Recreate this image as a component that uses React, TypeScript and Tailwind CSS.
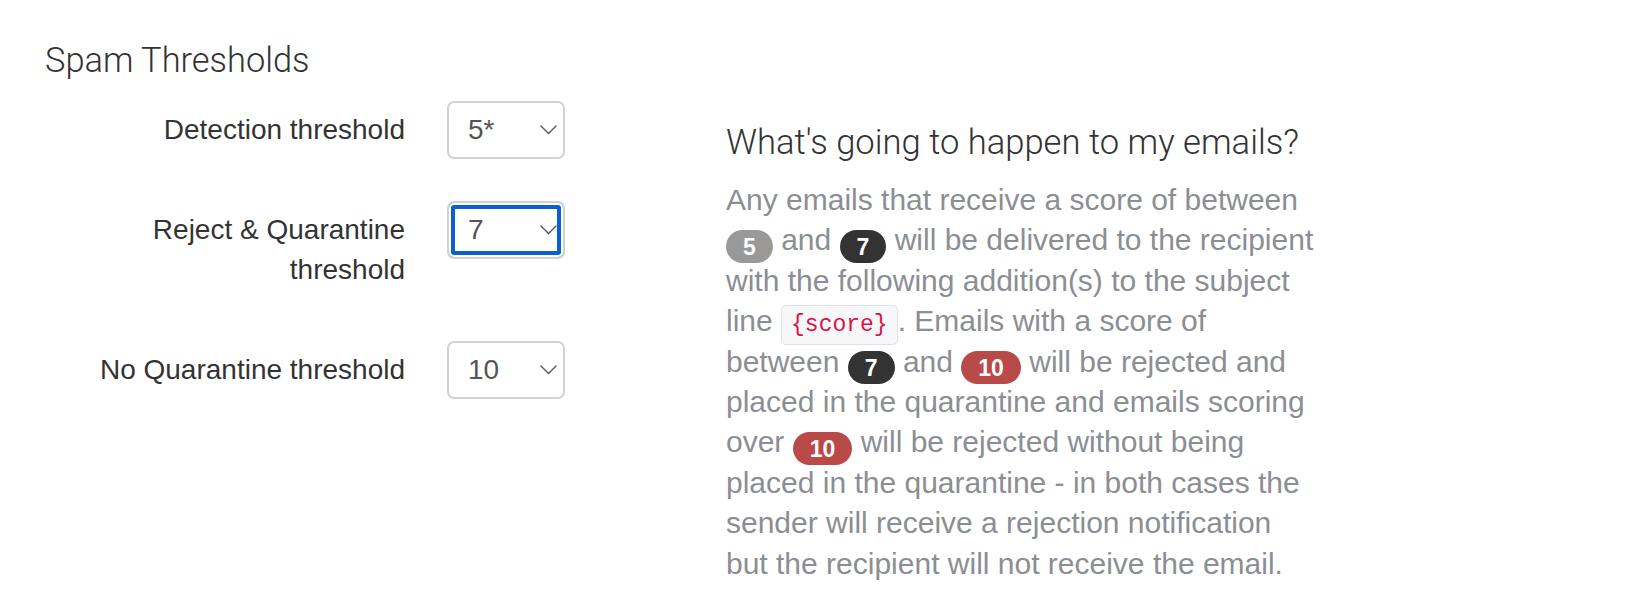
import { useState } from "react";

type Tone = "muted" | "dark" | "danger";

const badgeTone: Record<Tone, string> = {
  muted: "bg-[#999999]",
  dark: "bg-[#333333]",
  danger: "bg-[#b94a48]",
};

// inline pill: padding paints the pill without stretching the line box
function Badge({ tone, children }: { tone: Tone; children: React.ReactNode }) {
  return (
    <span
      className={`rounded-full px-[17px] py-[3.5px] align-[-4px] text-[23px] font-bold leading-none text-white ${badgeTone[tone]}`}
    >
      {children}
    </span>
  );
}

function Chevron() {
  return (
    <svg
      className="pointer-events-none absolute right-[8px] top-1/2 -translate-y-1/2"
      width="17"
      height="10"
      viewBox="0 0 17 10"
      fill="none"
    >
      <polyline
        points="1,1 8.5,8.5 16,1"
        stroke="#555"
        strokeWidth="1.4"
        strokeLinecap="round"
        strokeLinejoin="round"
      />
    </svg>
  );
}

type Field = {
  label: React.ReactNode;
  value: string;
  options: string[];
  focused?: boolean;
  spacing: string;
};

const scores = ["1", "2", "3", "4", "5*", "6", "7", "8", "9", "10", "11", "12"];

const fields: Field[] = [
  { label: "Detection threshold", value: "5*", options: scores, spacing: "" },
  {
    label: "Reject & Quarantine threshold",
    value: "7",
    options: scores,
    focused: true,
    spacing: "mt-[42px]",
  },
  { label: "No Quarantine threshold", value: "10", options: scores, spacing: "mt-[51px]" },
];

function ThresholdRow({ field }: { field: Field }) {
  const [value, setValue] = useState(field.value);
  return (
    <div className={`flex items-start ${field.spacing}`}>
      <label className="w-[360px] pt-[9px] text-right text-[28px] leading-[40px] text-[#333]">
        {field.label}
      </label>
      <div className="relative ml-[42px] w-[118px]">
        <select
          value={value}
          onChange={(e) => setValue(e.target.value)}
          className={`h-[58px] w-full appearance-none rounded-[7px] border-2 border-[#d2d2d2] bg-white pl-[19px] text-[28px] text-[#555] outline-none ${
            field.focused
              ? "shadow-[inset_0_0_0_2px_#ffffff,inset_0_0_0_6px_#0b5fd0]"
              : ""
          }`}
        >
          {field.options.map((o) => (
            <option key={o} value={o}>
              {o}
            </option>
          ))}
        </select>
        <Chevron />
      </div>
    </div>
  );
}

export default function App() {
  return (
    <div className="min-h-[616px] bg-white px-[45px] pt-[40px] font-['Liberation_Sans',Arial,sans-serif]">
      <h3 className="font-['Roboto',sans-serif] text-[34.4px] font-light leading-[40px] text-[#333]">
        Spam Thresholds
      </h3>

      <div className="mt-[21px] flex">
        <form className="w-[681px]">
          {fields.map((f) => (
            <ThresholdRow key={f.value} field={f} />
          ))}
        </form>

        <div className="mt-[21px]">
          <h4 className="font-['Roboto',sans-serif] text-[34.6px] font-light leading-[40px] text-[#333]">
            What's going to happen to my emails?
          </h4>
          <p className="mt-[18px] whitespace-nowrap text-[30px] leading-[40.4px] text-[#8b8e93]">
            Any emails that receive a score of between
            <br />
            <Badge tone="muted">5</Badge> and <Badge tone="dark">7</Badge> will be delivered to the recipient
            <br />
            with the following addition(s) to the subject
            <br />
            line{" "}
            <code className="rounded-[5px] border border-[#e1e1e8] bg-[#f7f7f9] px-[9px] py-[6px] font-['Liberation_Mono',monospace] text-[23px] leading-none text-[#dd1144]">
              {"{score}"}
            </code>
            . Emails with a score of
            <br />
            between <Badge tone="dark">7</Badge> and <Badge tone="danger">10</Badge> will be rejected and
            <br />
            placed in the quarantine and emails scoring
            <br />
            over <Badge tone="danger">10</Badge> will be rejected without being
            <br />
            placed in the quarantine - in both cases the
            <br />
            sender will receive a rejection notification
            <br />
            but the recipient will not receive the email.
          </p>
        </div>
      </div>
    </div>
  );
}
